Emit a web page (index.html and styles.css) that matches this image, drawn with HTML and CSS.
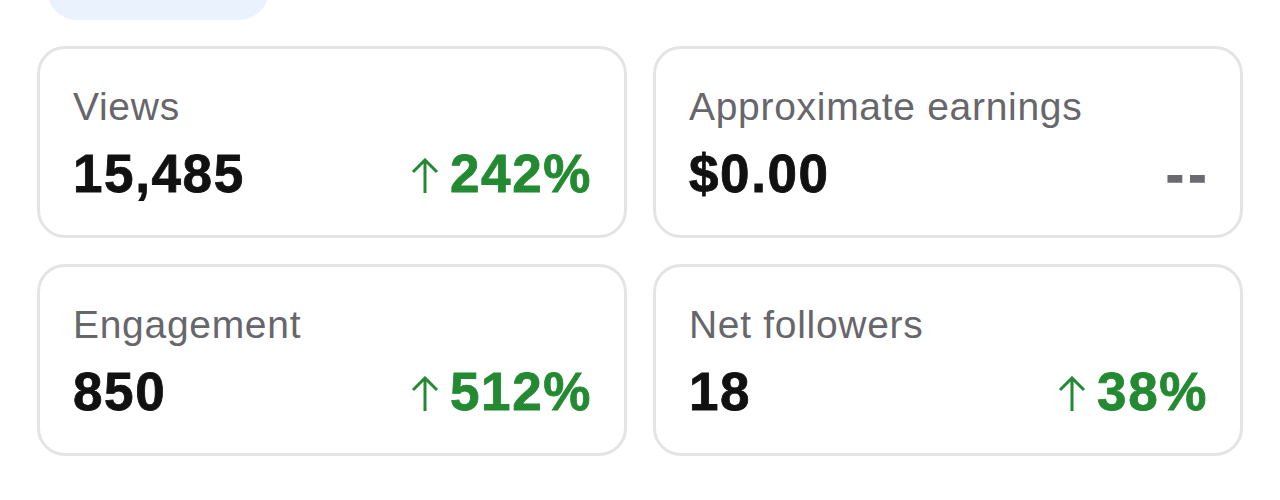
FILE: index.html
```html
<!DOCTYPE html>
<html>
<head>
    <link rel="stylesheet" href="styles.css">
</head>
<body>
    <div class="page">
        <div class="tab-pill"></div>

        <div class="stats-grid">
            <div class="stat-card">
                <div class="stat-label">Views</div>
                <div class="stat-row">
                    <span class="stat-value">15,485</span>
                    <span class="stat-change"><svg class="arrow" width="28" height="36" viewBox="0 0 28 36"><path d="M14 35V2M2 14L14 2L26 14" fill="none" stroke="currentColor" stroke-width="3"/></svg>242%</span>
                </div>
            </div>

            <div class="stat-card">
                <div class="stat-label">Approximate earnings</div>
                <div class="stat-row">
                    <span class="stat-value">$0.00</span>
                    <span class="stat-empty">--</span>
                </div>
            </div>

            <div class="stat-card">
                <div class="stat-label">Engagement</div>
                <div class="stat-row">
                    <span class="stat-value">850</span>
                    <span class="stat-change"><svg class="arrow" width="28" height="36" viewBox="0 0 28 36"><path d="M14 35V2M2 14L14 2L26 14" fill="none" stroke="currentColor" stroke-width="3"/></svg>512%</span>
                </div>
            </div>

            <div class="stat-card">
                <div class="stat-label">Net followers</div>
                <div class="stat-row">
                    <span class="stat-value">18</span>
                    <span class="stat-change"><svg class="arrow" width="28" height="36" viewBox="0 0 28 36"><path d="M14 35V2M2 14L14 2L26 14" fill="none" stroke="currentColor" stroke-width="3"/></svg>38%</span>
                </div>
            </div>
        </div>
    </div>
</body>
</html>
```

FILE: styles.css
```css
body {
    margin: 0;
    background-color: white;
    font-family: "Liberation Sans", Arial, sans-serif;
    overflow: hidden;
}

.page {
    padding: 0 37px;
}

.tab-pill {
    width: 222px;
    height: 60px;
    margin-top: -40px;
    margin-left: 10px;
    margin-bottom: 26px;
    background-color: #eaf3fd;
    border-radius: 30px;
}

.stats-grid {
    display: grid;
    grid-template-columns: 1fr 1fr;
    gap: 26px;
}

.stat-card {
    border: 3px solid #e4e4e7;
    border-radius: 28px;
    padding: 36px 33px 32px 33px;
}

.stat-label {
    font-size: 39px;
    line-height: 44px;
    color: #66666b;
    letter-spacing: 0.7px;
    margin-bottom: 16px;
}

.stat-row {
    display: flex;
    justify-content: space-between;
    align-items: baseline;
    line-height: 58px;
}

.stat-value {
    font-size: 53px;
    font-weight: bold;
    color: #111;
    letter-spacing: 1.6px;
    -webkit-text-stroke: 0.8px #111;
}

.stat-change {
    font-size: 53px;
    font-weight: bold;
    color: #238a32;
    letter-spacing: 1.6px;
    margin-right: -1px;
    -webkit-text-stroke: 0.8px #238a32;
}

.arrow {
    margin-right: 11px;
    margin-bottom: -2px;
}

.stat-empty {
    font-size: 52px;
    font-weight: bold;
    color: #6b6b6f;
    letter-spacing: 5px;
    margin-right: -4px;
    -webkit-text-stroke: 1.6px #6b6b6f;
}
```
